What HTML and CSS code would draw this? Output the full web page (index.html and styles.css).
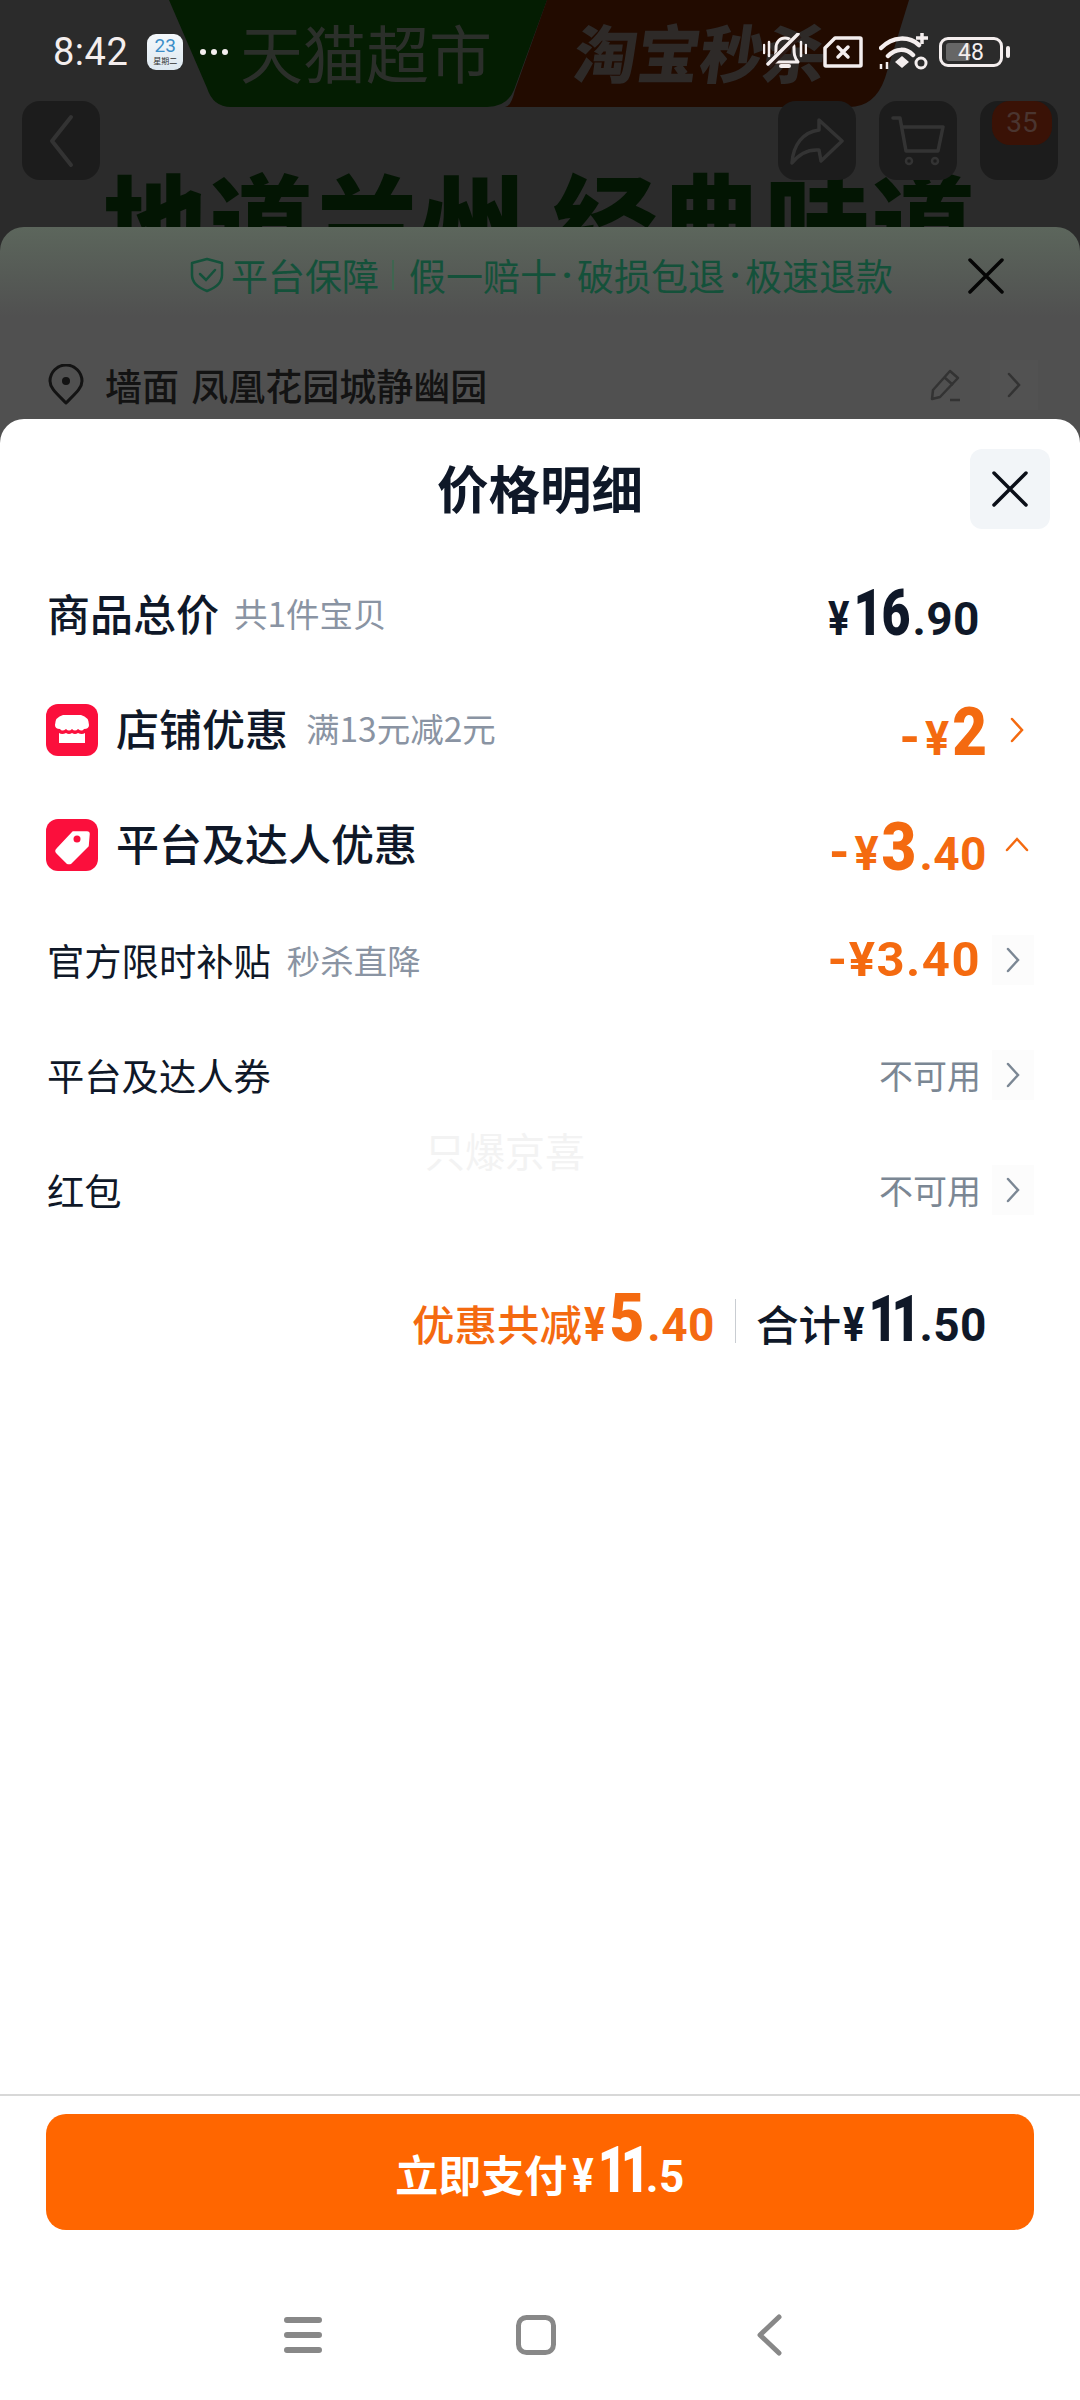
FILE: index.html
```html
<!DOCTYPE html>
<html lang="zh">
<head>
<meta charset="utf-8">
<title>价格明细</title>
<link rel="stylesheet" href="styles.css">
</head>
<body>
<div class="screen">
  <div class="backdrop">
    <div class="banner">
      <svg class="banner-shape" width="740" height="107" viewBox="0 0 740 107">
        <path d="M0 0H378L345 90Q338 107 318 107H62Q44 107 38 88Z" fill="#041d02"/>
        <path d="M378 0H740L716 78Q706 107 680 107H336Q342 107 346 90Z" fill="#220b00"/>
      </svg>
      <span class="banner-a">天猫超市</span>
      <span class="banner-b">淘宝秒杀</span>
    </div>
    <div class="topbar">
      <div class="tbtn tbtn-back"><svg width="26" height="54" viewBox="0 0 26 54"><path d="M23 3L4 27L23 51" fill="none" stroke="#333" stroke-width="4" stroke-linecap="round" stroke-linejoin="round"/></svg></div>
      <div class="tbtn tbtn-share"><svg width="56" height="48" viewBox="0 0 56 48"><path d="M30 3L53 24L32 44L30 33C18 32 10 37 3 46C4 28 14 15 30 13Z" fill="none" stroke="#333" stroke-width="3.5" stroke-linejoin="round"/></svg></div>
      <div class="tbtn tbtn-cart"><svg width="54" height="52" viewBox="0 0 54 52"><path d="M2 3H9L15 36H47L52 12H11" fill="none" stroke="#333" stroke-width="3.5" stroke-linejoin="round" stroke-linecap="round"/><circle cx="18" cy="46" r="3" fill="none" stroke="#333" stroke-width="2.5"/><circle cx="44" cy="46" r="3" fill="none" stroke="#333" stroke-width="2.5"/></svg></div>
      <div class="tbtn tbtn-more"><span class="badge">35</span></div>
    </div>
    <div class="headline">地道兰州 经典味道</div>
  </div>

  <div class="status">
    <span class="time">8:42</span>
    <span class="cal"><span class="cal-num">23</span><span class="cal-day">星期二</span></span>
    <span class="dots"><i></i><i></i><i></i></span>
    <span class="status-right">
      <svg width="44" height="38" viewBox="0 0 44 38"><path d="M9 29C13 24 13 20 13 15C13 9 17 5 22 5C27 5 31 9 31 15C31 20 31 24 35 29Z" fill="none" stroke="#f4eeee" stroke-width="3" stroke-linejoin="round"/><path d="M18 33H26" stroke="#f4eeee" stroke-width="4" stroke-linecap="round"/><path d="M5 33L36 2" stroke="#2a1a16" stroke-width="7"/><path d="M5 31L35 1" stroke="#f4eeee" stroke-width="3.5" stroke-linecap="round"/><path d="M1 12V20M6 9V23M38 9V23M43 12V20" stroke="#f4eeee" stroke-width="2.5" stroke-linecap="round"/></svg>
      <svg class="ico-sim" width="40" height="32" viewBox="0 0 40 32"><path d="M2 12L12 2H37Q38 2 38 3V29Q38 30 37 30H3Q2 30 2 29Z" fill="none" stroke="#f4eeee" stroke-width="3.5" stroke-linejoin="round"/><path d="M15 11L25 21M25 11L15 21" stroke="#f4eeee" stroke-width="3.5" stroke-linecap="round"/></svg>
      <svg class="ico-wifi" width="50" height="38" viewBox="0 0 50 38"><path d="M2 15C14 3 30 3 40 12M9 23C17 15 27 15 34 22" fill="none" stroke="#f4eeee" stroke-width="4.5" stroke-linecap="round"/><path d="M16 29L23 23L30 29L23 35Z" fill="#f4eeee"/><path d="M37 5H49M43 0V11" stroke="#f4eeee" stroke-width="3.5"/><circle cx="42" cy="30" r="5" fill="none" stroke="#f4eeee" stroke-width="3"/><path d="M2 36V31M8 36V29" stroke="#f4eeee" stroke-width="2.5"/></svg>
      <span class="battery"><span class="battery-fill"></span><span class="battery-num">48</span></span>
      <span class="battery-nub"></span>
    </span>
  </div>

  <section class="under-sheet">
    <div class="guarantee">
      <svg class="g-shield" width="34" height="36" viewBox="0 0 34 36"><path d="M17 2L32 6V18C32 26 25 31 17 34C9 31 2 26 2 18V6Z" fill="none" stroke="#14513a" stroke-width="2.5" stroke-linejoin="round"/><path d="M10 17L16 23L25 13" fill="none" stroke="#14513a" stroke-width="2.5" stroke-linecap="round"/></svg>
      <span>平台保障</span><span class="g-sep"></span><span>假一赔十</span><span class="g-dot">·</span><span>破损包退</span><span class="g-dot">·</span><span>极速退款</span>
      <svg class="g-close" width="36" height="36" viewBox="0 0 36 36"><path d="M2 2L34 34M34 2L2 34" stroke="#050505" stroke-width="3.5" stroke-linecap="round"/></svg>
    </div>
    <div class="address">
      <svg width="36" height="42" viewBox="0 0 36 42"><path d="M18 39C8 29 2 24 2 17A16 16 0 0 1 34 17C34 24 28 29 18 39Z" fill="none" stroke="#131313" stroke-width="3" stroke-linejoin="round"/><circle cx="18" cy="17" r="4" fill="#131313"/></svg>
      <span class="addr-text">墙面 凤凰花园城静幽园</span>
      <svg class="addr-edit" width="34" height="34" viewBox="0 0 34 34"><path d="M22 3L30 10L12 29L4 31L5 22Z" fill="none" stroke="#333" stroke-width="2.5" stroke-linejoin="round"/><path d="M16 9L25 17M22 32H32" stroke="#333" stroke-width="2.5"/></svg>
      <span class="addr-chev"><svg width="14" height="26" viewBox="0 0 14 26"><path d="M2 2L12 13L2 24" fill="none" stroke="#333" stroke-width="2.5" stroke-linecap="round"/></svg></span>
    </div>
  </section>

  <section class="sheet">
    <header class="sheet-head">
      <h1 class="sheet-title">价格明细</h1>
      <button class="close-btn"><svg width="36" height="36" viewBox="0 0 36 36"><path d="M2 2L34 34M34 2L2 34" stroke="#0b0f18" stroke-width="3.5" stroke-linecap="round"/></svg></button>
    </header>
    <div class="rows">
      <div class="row">
        <span class="label strong">商品总价</span><span class="sub sub-a">共1件宝贝</span>
        <span class="amount dark nochev"><span class="yen">¥</span><span class="big pair">16</span><span class="dec">.90</span></span>
      </div>
      <div class="row">
        <svg class="row-ico" width="52" height="52" viewBox="0 0 52 52"><rect width="52" height="52" rx="12" fill="#fb0f3c"/><path d="M17 11H35Q43 13 43 21Q43 25 38 25Q36 28 32 25Q29 28 26 25Q23 28 20 25Q16 28 14 25Q9 25 9 21Q9 13 17 11Z" fill="#fff"/><path d="M13 29Q16 31 20 29Q23 31 26 29Q29 31 32 29Q36 31 39 29V39H13Z" fill="#fff"/></svg>
        <span class="label strong">店铺优惠</span><span class="sub sub-b">满13元减2元</span>
        <span class="amount orange lowered"><span class="dash">-</span><span class="yen">¥</span><span class="big">2</span></span>
        <svg class="chev" width="16" height="28" viewBox="0 0 16 28"><path d="M3 3L13 14L3 25" fill="none" stroke="#f46a10" stroke-width="2.5" stroke-linecap="round"/></svg>
      </div>
      <div class="row">
        <svg class="row-ico" width="52" height="52" viewBox="0 0 52 52"><rect width="52" height="52" rx="12" fill="#fb0f3c"/><path d="M27 13L41 13Q43 13 43 15L42 27L25 44Q23 45 21 44L11 34Q9 32 11 30Z" fill="#fff" stroke="#fff" stroke-width="1.5" stroke-linejoin="round"/><circle cx="31" cy="20" r="3.5" fill="#fb0f3c"/></svg>
        <span class="label strong">平台及达人优惠</span>
        <span class="amount orange lowered"><span class="dash">-</span><span class="yen">¥</span><span class="big">3</span><span class="dec">.40</span></span>
        <svg class="chev" width="24" height="28" viewBox="0 0 24 28"><path d="M2 19L12 8L22 19" fill="none" stroke="#f46a10" stroke-width="2.5" stroke-linecap="round"/></svg>
      </div>
      <div class="row">
        <span class="label">官方限时补贴</span><span class="sub sub-c">秒杀直降</span>
        <span class="amount orange flat">-¥3.40</span>
        <span class="chev-box"><svg width="16" height="28" viewBox="0 0 16 28"><path d="M3 3L13 14L3 25" fill="none" stroke="#7b8794" stroke-width="2.5" stroke-linecap="round"/></svg></span>
      </div>
      <div class="row">
        <span class="label">平台及达人券</span>
        <span class="unavail">不可用</span>
        <span class="chev-box"><svg width="16" height="28" viewBox="0 0 16 28"><path d="M3 3L13 14L3 25" fill="none" stroke="#7b8794" stroke-width="2.5" stroke-linecap="round"/></svg></span>
      </div>
      <div class="row">
        <span class="label">红包</span>
        <span class="unavail">不可用</span>
        <span class="chev-box"><svg width="16" height="28" viewBox="0 0 16 28"><path d="M3 3L13 14L3 25" fill="none" stroke="#7b8794" stroke-width="2.5" stroke-linecap="round"/></svg></span>
      </div>
      <div class="watermark">只爆京喜</div>
    </div>
    <div class="summary">
      <span class="amount orange"><span class="sum-label">优惠共减</span><span class="yen">¥</span><span class="big">5</span><span class="dec">.40</span></span>
      <span class="sum-sep"></span>
      <span class="amount dark"><span class="sum-label">合计</span><span class="yen">¥</span><span class="big pair ones">11</span><span class="dec">.50</span></span>
    </div>
    <div class="spacer"></div>
    <footer class="pay-bar">
      <button class="pay-btn"><span class="pay-label">立即支付</span><span class="amount"><span class="yen">¥</span><span class="big pair ones">11</span><span class="dec">.5</span></span></button>
    </footer>
    <nav class="navbar">
      <svg width="38" height="38" viewBox="0 0 38 38"><path d="M3 4H35M3 19H35M3 34H35" stroke="#888" stroke-width="6" stroke-linecap="round"/></svg>
      <svg class="nav-home" width="42" height="42" viewBox="0 0 42 42"><rect x="3.5" y="3.5" width="35" height="35" rx="8" fill="none" stroke="#888" stroke-width="5"/></svg>
      <svg class="nav-back" width="26" height="42" viewBox="0 0 26 42"><path d="M23 3L4 21L23 39" fill="none" stroke="#888" stroke-width="5" stroke-linecap="round" stroke-linejoin="round"/></svg>
    </nav>
  </section>
</div>
</body>
</html>
```
FILE: styles.css
```css
* { box-sizing: border-box; margin: 0; padding: 0; }
html, body { width: 1080px; height: 2400px; overflow: hidden; }
body { font-family: "Noto Sans CJK SC", "Noto Sans", sans-serif; background: #fff; }
.screen { position: relative; width: 1080px; height: 2400px; overflow: hidden; background: #2b2b2b; }

/* dimmed page behind the sheets */
.backdrop { display: flex; flex-direction: column; }
.banner { position: relative; display: flex; height: 107px; margin-left: 169px; width: 740px; }
.banner-shape { position: absolute; left: 0; top: 0; }
.banner-a, .banner-b { position: relative; font-size: 63px; line-height: 107px; margin-top: -3px; }
.banner-a { margin-left: 71px; color: #2b2f2a; font-weight: 400; }
.banner-b { margin-left: 83px; color: #2e2a28; font-weight: 900; transform: skewX(-8deg); }
.topbar { display: flex; margin-top: -6px; padding: 0 22px; height: 79px; }
.tbtn { width: 78px; height: 79px; border-radius: 18px; background: #1c1c1c; display: flex; align-items: center; justify-content: center; position: relative; }
.tbtn-share { margin-left: auto; }
.tbtn-cart { margin-left: 23px; }
.tbtn-more { margin-left: 23px; }
.badge { position: absolute; top: 0; right: 6px; width: 60px; height: 44px; border-radius: 18px; background: #3a1206; color: #4a3530; font: 400 28px/44px Roboto, sans-serif; text-align: center; }
.headline { font-size: 104px; font-weight: 900; line-height: 104px; color: #031503; text-align: center; margin-top: -14px; letter-spacing: 2px; white-space: nowrap; }

/* status bar */
.status { position: absolute; left: 0; top: 0; width: 1080px; height: 104px; display: flex; align-items: center; padding-left: 53px; color: #f4eeee; }
.time { font: 400 38px/1 Roboto, sans-serif; letter-spacing: 0.5px; }
.cal { width: 36px; height: 36px; margin-left: 19px; border-radius: 9px; background: linear-gradient(#f4f8fb, #dde8f0); display: flex; flex-direction: column; align-items: center; }
.cal-num { font: 400 19px/20px Roboto, sans-serif; color: #3c8ec8; margin-top: 2px; }
.cal-day { font-size: 8px; line-height: 9px; color: #333; }
.dots { display: flex; gap: 5px; margin-left: 17px; }
.dots i { width: 6px; height: 6px; border-radius: 50%; background: #f4eeee; }
.status-right { display: flex; align-items: center; margin-left: auto; padding-right: 70px; position: relative; }
.ico-sim { margin-left: 16px; }
.ico-wifi { margin-left: 16px; }
.battery { position: relative; margin-left: 10px; width: 64px; height: 30px; border: 3px solid #f4eeee; border-radius: 9px; display: flex; align-items: center; justify-content: center; }
.battery-fill { position: absolute; left: 4px; top: 3px; bottom: 3px; width: 24px; border-radius: 3px; background: #666; }
.battery-num { position: relative; font: 400 23px/1 Roboto, sans-serif; color: #f4eeee; }
.battery-nub { width: 4px; height: 12px; margin-left: 3px; border-radius: 2px; background: #f4eeee; }

/* second sheet */
.under-sheet { position: absolute; left: 0; top: 227px; width: 1080px; height: 240px; border-radius: 24px 24px 0 0; background: linear-gradient(#5c665c, #505050 90px); }
.guarantee { position: relative; display: flex; align-items: center; height: 36px; margin-top: 30px; padding-left: 190px; color: #14513a; font-size: 37px; white-space: nowrap; }
.g-shield { margin-right: 7px; }
.g-sep { width: 2px; height: 30px; margin: 0 15px 0 13px; background: #3f6650; }
.g-dot { font-family: Roboto, sans-serif; font-weight: 700; width: 20px; text-align: center; }
.g-close { position: absolute; left: 968px; top: 1px; }
.address { display: flex; align-items: center; margin-top: 67px; padding-left: 48px; height: 50px; }
.addr-text { margin-left: 21px; font-size: 37px; font-weight: 500; color: #131313; word-spacing: 4px; }
.addr-edit { margin-left: auto; }
.addr-chev { display: flex; align-items: center; justify-content: center; width: 48px; height: 50px; margin: 0 42px 0 28px; background: #525252; }

/* price sheet */
.sheet { position: absolute; left: 0; top: 419px; width: 1080px; height: 1981px; background: #fff; border-radius: 24px 24px 0 0; display: flex; flex-direction: column; }
.sheet-head { position: relative; height: 138px; display: flex; justify-content: center; }
.sheet-title { font-size: 51.5px; font-weight: 700; line-height: 52px; margin-top: 42px; color: #0f1828; }
.close-btn { position: absolute; left: 970px; top: 30px; width: 80px; height: 80px; border: 0; border-radius: 12px; background: #f2f5f8; display: flex; align-items: center; justify-content: center; }
.rows { position: relative; display: flex; flex-direction: column; }
.row { display: flex; align-items: center; height: 115px; padding: 0 47px 0 47px; color: #0f1828; }
.row-ico { flex: none; margin-right: 18px; margin-left: -1px; }
.label { font-size: 37.3px; font-weight: 400; white-space: nowrap; }
.label.strong { font-size: 43px; font-weight: 500; margin-top: -5px; }
.sub { font-size: 33.5px; color: #8a94a3; white-space: nowrap; }
.sub-a { margin-left: 15px; margin-top: -5px; }
.sub-b { margin-left: 18px; margin-top: -4px; }
.sub-c { margin-left: 16px; }
.amount { display: inline-flex; align-items: baseline; font-family: Roboto, sans-serif; font-weight: 700; line-height: 1; white-space: nowrap; margin-left: auto; }
.nochev { margin-right: 53px; margin-top: 6px; }
.lowered { margin-top: 10px; }
.lowered .yen { font-size: 45px; transform: scaleY(1.08); margin-right: 3px; }
.dark { color: #0f1828; }
.orange { color: #f46a10; }
.yen { display: inline-block; font-size: 40px; margin-right: 4px; transform: scaleY(1.2); transform-origin: 50% 84%; }
.dash { font-size: 52px; margin-right: 5px; }
.big { display: inline-block; font-size: 60px; font-weight: 900; transform: scaleY(1.1); transform-origin: 50% 84%; }
.big.pair { font-size: 50px; transform: scaleY(1.3); letter-spacing: -1px; }
.big.pair.ones { letter-spacing: -6px; margin-right: 2px; }
.dec { font-size: 46px; margin-left: 3px; letter-spacing: 0.5px; }
.flat { font-size: 49px; letter-spacing: 1.5px; }
.chev { flex: none; width: 24px; margin: 0 4px 0 18px; }
.chev-box { flex: none; display: flex; align-items: center; justify-content: center; width: 42px; height: 50px; margin: 0 -1px 0 11px; background: #fcfcfc; }
.unavail { margin-left: auto; font-size: 34px; color: #7b8794; }
.watermark { position: absolute; left: 425px; top: 564px; font-size: 40px; color: #f3f3f3; }

.summary { display: flex; align-items: baseline; justify-content: flex-end; margin-top: 44px; padding-right: 93px; height: 60px; }
.summary .amount { margin-left: 0; }
.sum-label { font-family: "Noto Sans CJK SC", sans-serif; font-size: 42.5px; font-weight: 500; margin-right: 2px; }
.sum-sep { width: 1px; height: 44px; margin: 0 20px; background: #c9cdd2; align-self: center; }
.spacer { flex: 1; }
.pay-bar { border-top: 2px solid #d8d8d8; padding: 18px 46px 0; height: 192px; }
.pay-btn { width: 988px; height: 116px; border: 0; border-radius: 20px; background: #ff6600; color: #fff; display: flex; align-items: baseline; justify-content: center; padding-top: 28px; font-family: inherit; }
.pay-label { font-size: 43px; font-weight: 700; margin-right: 5px; }
.pay-btn .amount { margin-left: 0; }
.pay-btn .dec { font-size: 44px; margin-left: 0; }
.navbar { height: 114px; flex: none; display: flex; align-items: center; padding: 0 0 16px 284px; }
.nav-home { margin-left: 193px; }
.nav-back { margin-left: 199px; }
```
